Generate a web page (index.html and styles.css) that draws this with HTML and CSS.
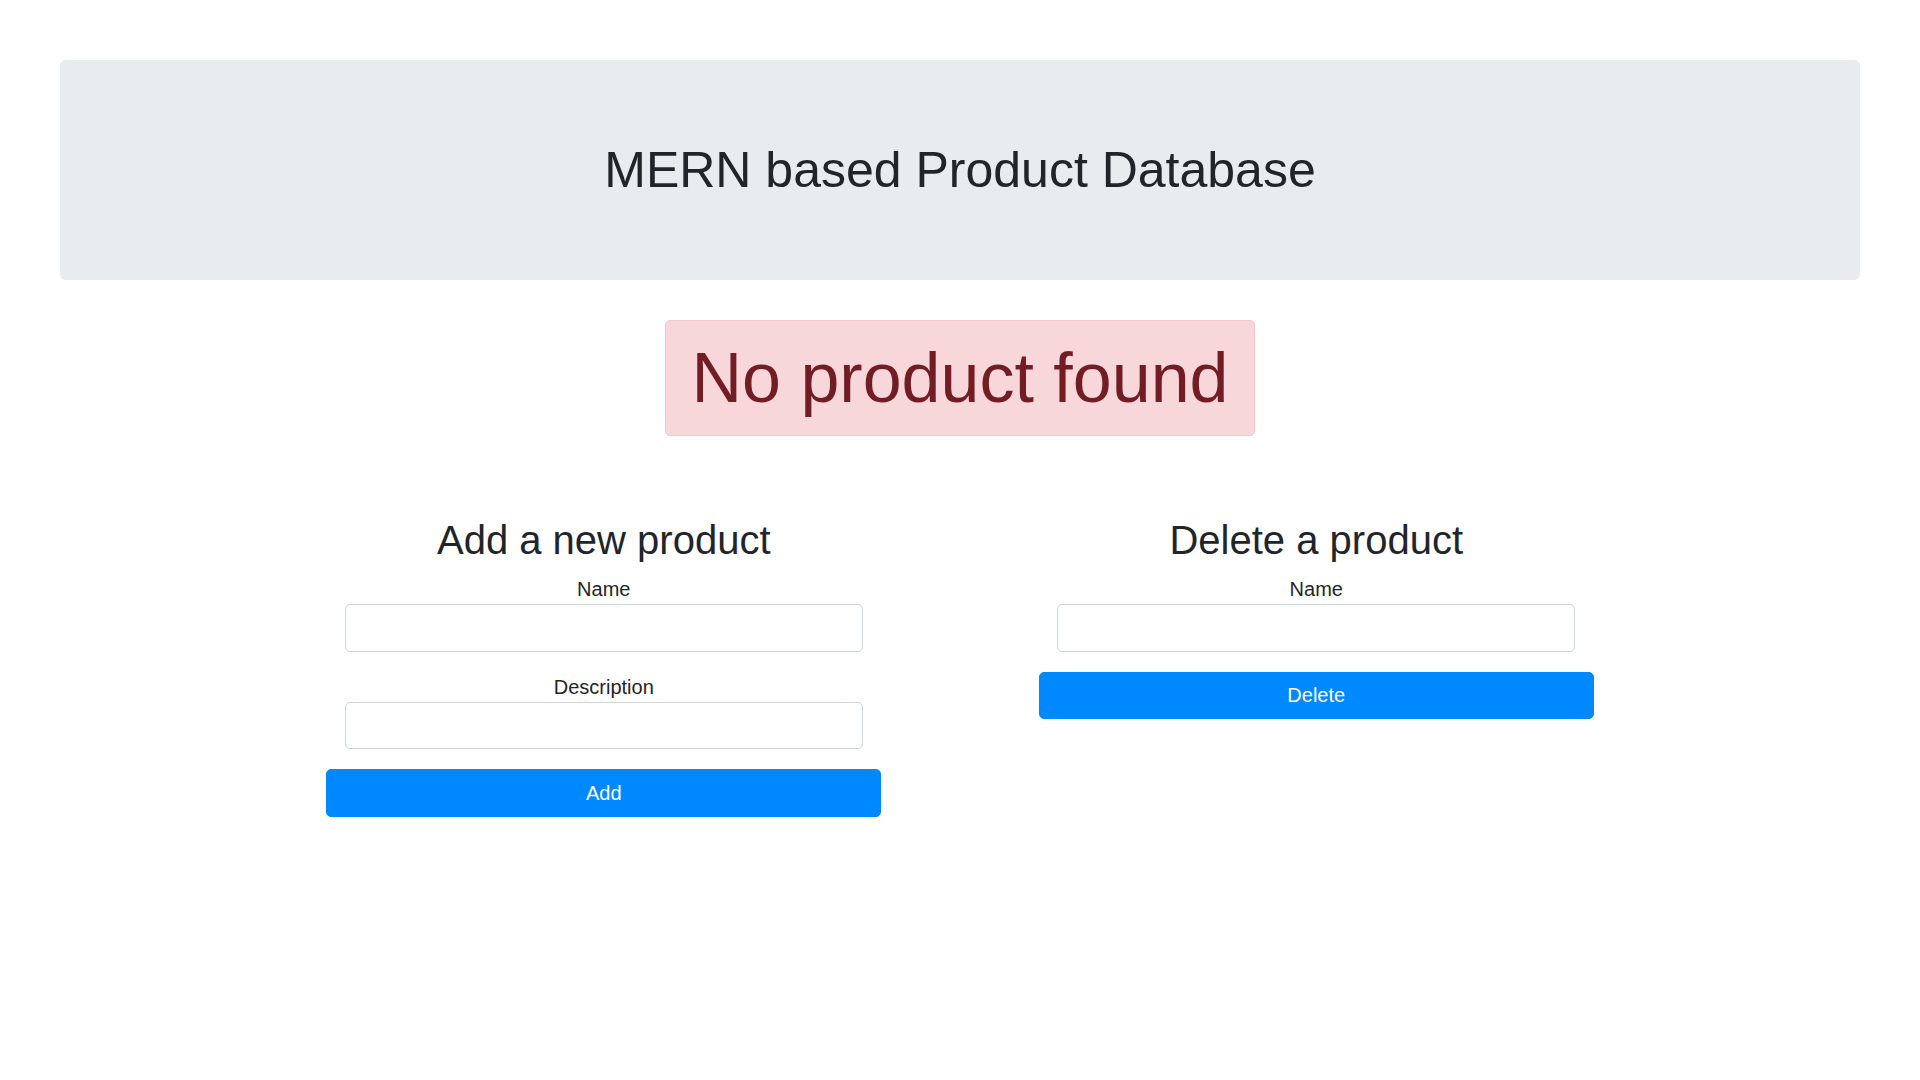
FILE: index.html
```html
<!DOCTYPE html>
<html lang="en">
<head>
<meta charset="utf-8">
<title>MERN based Product Database</title>
<link rel="stylesheet" href="styles.css">
</head>
<body>
  <header class="jumbotron">
    <h1 class="jumbotron-title">MERN based Product Database</h1>
  </header>

  <div class="alert-wrap">
    <div class="alert">No product found</div>
  </div>

  <main class="container">
    <section class="col">
      <h2 class="col-title">Add a new product</h2>
      <form class="form">
        <div class="form-group">
          <label class="form-label" for="add-name">Name</label>
          <input class="form-control" id="add-name" type="text">
        </div>
        <div class="form-group">
          <label class="form-label" for="add-desc">Description</label>
          <input class="form-control" id="add-desc" type="text">
        </div>
        <button class="btn" type="button">Add</button>
      </form>
    </section>
    <section class="col">
      <h2 class="col-title">Delete a product</h2>
      <form class="form">
        <div class="form-group">
          <label class="form-label" for="del-name">Name</label>
          <input class="form-control" id="del-name" type="text">
        </div>
        <button class="btn" type="button">Delete</button>
      </form>
    </section>
  </main>
</body>
</html>
```

FILE: styles.css
```css
* { box-sizing: border-box; }

html, body {
  margin: 0;
  padding: 0;
  background: #fff;
}

body {
  font-family: "Liberation Sans", Arial, sans-serif;
  font-size: 20px;
  line-height: 1.5;
  color: #212529;
}

.jumbotron {
  margin: 60px 60px 40px;
  padding: 80px 40px;
  background: #e9ecef;
  border-radius: 6px;
  text-align: center;
}

.jumbotron-title {
  margin: 0;
  font-size: 50px;
  font-weight: 500;
  line-height: 60px;
}

.alert-wrap {
  display: flex;
  justify-content: center;
}

.alert {
  padding: 15px 25px;
  background: #f8d7da;
  border: 1.25px solid #f5c6cb;
  border-radius: 5px;
  color: #721c24;
  font-size: 70px;
  line-height: 84px;
}

.container {
  width: 1425px;
  margin: 80px auto 0;
  display: flex;
}

.col {
  width: 50%;
  display: flex;
  flex-direction: column;
  align-items: center;
}

.col-title {
  margin: 0 0 10px;
  font-size: 40px;
  font-weight: 500;
  line-height: 48px;
  text-align: center;
}

.form {
  width: 555px;
  display: flex;
  flex-direction: column;
  align-items: center;
}

.form-group {
  width: 518px;
  margin-bottom: 20px;
  display: flex;
  flex-direction: column;
  align-items: center;
}

.form-label {
  display: block;
  line-height: 30px;
  height: 30px;
}

.form-control {
  width: 100%;
  height: 47.5px;
  padding: 7.5px 15px;
  border: 1.25px solid #ced4da;
  border-radius: 5px;
  background: #fff;
  font-family: inherit;
  font-size: 20px;
  color: #495057;
}

.btn {
  width: 100%;
  height: 47.5px;
  padding: 7.5px 15px;
  border: 1.25px solid #0088ff;
  border-radius: 5px;
  background: #0088ff;
  color: #fff;
  font-family: inherit;
  font-size: 20px;
  line-height: 30px;
  cursor: pointer;
}
```
